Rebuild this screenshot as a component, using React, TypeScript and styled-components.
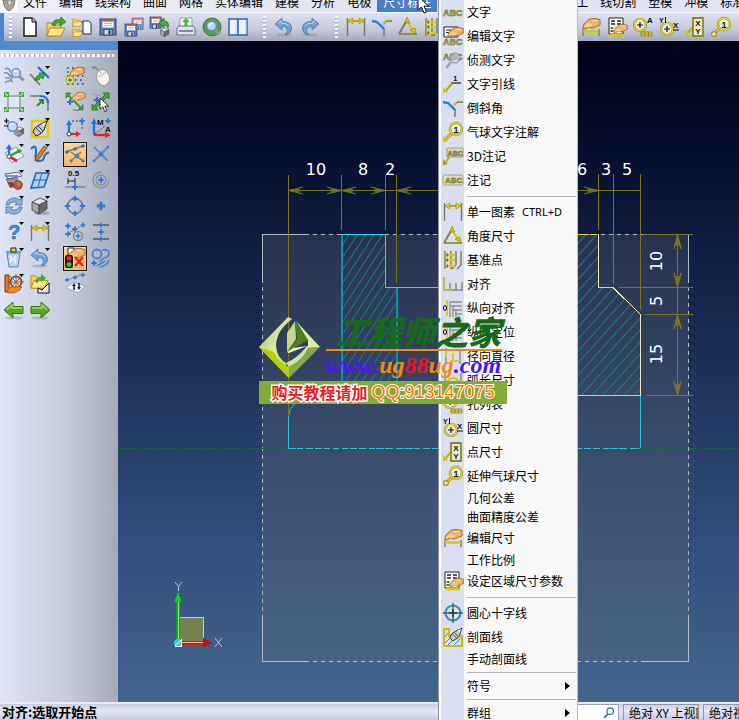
import React from 'react';
import styled, { createGlobalStyle, css } from 'styled-components';

const Global = createGlobalStyle`
  * { box-sizing: border-box; }
  html, body { margin: 0; padding: 0; }
  body, button, input {
    font-family: "Noto Sans CJK SC", "Liberation Sans", sans-serif;
    font-size: 12px;
    color: #000;
  }
  button { border: 0; padding: 0; background: none; }
`;

/* ---------- shared drawing parts ---------- */

type P = { x?: number; y?: number; s?: number };
const at = (x = 0, y = 0, s = 1) => `translate(${x} ${y}) scale(${s})`;

const Hand = ({ x, y, s }: P) => (
  <g transform={at(x, y, s)}>
    <path d="M1 9 L2 6 L7 1.5 Q9 0 13 .5 L18 1.5 V7 L14 8.5 Q12 10 9 10 L7 9 L3 11 Q0 11 1 9Z" fill="#f0b469" stroke="#9a6428" strokeWidth=".9" />
    <path d="M3 8.5 L7.5 5.5 M6 9 L10 6.5 M10 3 L15 2.5" stroke="#fbe0ae" strokeWidth="1.2" fill="none" />
  </g>
);
const Plus = ({ x, y, s }: P) => (
  <path transform={at(x, y, s)} d="M-3 0H3M0 -3V3" stroke="#2f78d8" strokeWidth="2" />
);
const Floppy = ({ x, y, s }: P) => (
  <g transform={at(x, y, s)}>
    <rect x="0" y="0" width="16" height="16" fill="#5e7fb8" stroke="#2d4676" />
    <rect x="2.5" y="1" width="11" height="7.5" fill="#fff" />
    <rect x="2.5" y="0" width="11" height="2.6" fill="#e0442c" />
    <path d="M4 4.6H12M4 6.6H12" stroke="#9aa" strokeWidth=".8" />
    <rect x="4" y="10.5" width="8" height="5.5" fill="#cfd6e4" stroke="#1d2c4c" strokeWidth=".7" />
    <rect x="8.4" y="11.5" width="2" height="4" fill="#1b2f5c" />
  </g>
);
const Lens = ({ x, y, s }: P) => (
  <g transform={at(x, y, s)}>
    <path d="M8 8 L12.5 12.5" stroke="#8a93a3" strokeWidth="3" />
    <circle cx="5" cy="5" r="4.4" fill="#bcdcfb" stroke="#6d8cb8" strokeWidth="1.4" />
    <path d="M2.8 4.4Q3.6 2.4 6 2.8" stroke="#fff" fill="none" />
  </g>
);
const Cube = ({ x, y, s }: P) => (
  <g transform={at(x, y, s)} stroke="#3a3a3a" strokeWidth=".8" strokeLinejoin="round">
    <path d="M1 4 L9 0 L16 3 L8 7Z" fill="#e6e6e6" />
    <path d="M1 4 L8 7 V16 L1 12Z" fill="#a9a9a9" />
    <path d="M8 7 L16 3 V11 L8 16Z" fill="#6c6c6c" />
  </g>
);
const Cone = ({ x, y, s }: P) => (
  <g transform={at(x, y, s)}>
    <path d="M0 10 Q1 5 6 3 L14 -1 L11 8 Q9 12 3 14Z" fill="#c9c9c9" stroke="#222" />
    <path d="M3 6 L8 11 M5 4 L10 9" stroke="#444" />
    <path d="M9 2 L13 0 L11 4Z" fill="#fff" />
  </g>
);
const Caret = () => <path d="M15 0H20L17.5 3Z" fill="#000" />;
const DimBar = ({ y = 4 }: { y?: number }) => (
  <g>
    <path d={`M1.5 ${y - 3}V19M18.5 ${y - 3}V19`} stroke="#77776c" strokeWidth="1.4" />
    <path d={`M2 ${y}H18`} stroke="#c9a800" strokeWidth="2" />
    <path d={`M2 ${y}L7 ${y - 3}V${y + 3}ZM18 ${y}L13 ${y - 3}V${y + 3}Z`} fill="#e2ce00" stroke="#8d7b00" strokeWidth=".5" />
  </g>
);
const Letters = ({ y = 14, x = 0, size = 9 }: { y?: number; x?: number; size?: number }) => (
  <text x={x} y={y} fontSize={size} fontWeight="700" fontFamily="Liberation Sans" fill="#cfc000" stroke="#66664a" strokeWidth=".5">ABC</text>
);
const Paper = () => (
  <g>
    <path d="M2 1H16V17H2Z" fill="#fff" stroke="#222" />
    <path d="M4 4H8M10 4H14M4 7H8M10 7H14" stroke="#222" strokeWidth="1.4" />
    <path d="M3.5 10H6.5V12H3.5Z" fill="#27a227" />
    <path d="M3.5 13H6.5V15H3.5Z" fill="#cc2a2a" />
  </g>
);
const Knee = () => <path d="M1 19L7 10" stroke="#c8b000" strokeWidth="2" />;
const Folder = ({ x, y, s }: P) => (
  <g transform={at(x, y, s)} stroke="#b98a1c">
    <path d="M1 4H6L8 6H15V17H1Z" fill="#f5d060" />
    <path d="M1 17L4 9H19L15 17Z" fill="#fde588" />
  </g>
);
const UndoShape = () => (
  <g>
    <ellipse cx="10" cy="18" rx="8" ry="1.6" fill="#8d94a6" opacity=".5" />
    <path d="M1 7L8 1V4.5Q18 4.5 17.5 12Q17 16.5 11 18Q14.5 14.5 13 11.5Q11.5 9.5 8 9.5V13Z" fill="#6c9fd2" stroke="#4a78ac" strokeWidth=".8" />
    <path d="M4 6.5L7 4V6Q13 6 15 9" stroke="#b7d8f5" fill="none" />
  </g>
);
const GreenArrow = () => (
  <g>
    <ellipse cx="10" cy="18" rx="9" ry="1.6" fill="#8b93a0" opacity=".5" />
    <path d="M0 10L9 2V6.5H19V13.5H9V18Z" fill="#57a81e" stroke="#33780c" />
    <path d="M3 9.5L8 5V8H18" stroke="#a9de76" fill="none" strokeWidth="1.3" />
  </g>
);
const Ring = ({ cx = 8, cy = 9, r = 6 }: { cx?: number; cy?: number; r?: number }) => (
  <g>
    <circle cx={cx} cy={cy} r={r} fill="#eeeede" stroke="#77703c" strokeWidth="2.2" />
    <circle cx={cx} cy={cy} r={r} fill="none" stroke="#ead91e" strokeWidth="1.3" />
    <path d={`M${cx - 3} ${cy}H${cx + 3}M${cx} ${cy - 3}V${cy + 3}`} stroke="#111" strokeWidth="1.2" />
  </g>
);
const Tiny = ({ x, y, t, size = 8 }: { x: number; y: number; t: string; size?: number }) => (
  <text x={x} y={y} fontSize={size} fontWeight="700" fontFamily="Liberation Sans" fill="#111">{t}</text>
);
const Cursor = ({ x, y, s }: P) => (
  <path transform={at(x, y, s)} d="M0 0V14L3.5 11L6 17L8.5 16L6 10.2H10.5Z" fill="#fff" stroke="#111" />
);
const Balloon = () => (
  <g>
    <path d="M1 19L8 12" stroke="#8b8422" strokeWidth="3" /><path d="M1 19L8 12" stroke="#ead91e" strokeWidth="1.6" />
    <path d="M0 19.5V14L5 19Z" fill="#d8c400" />
    <circle cx="13" cy="7" r="6" fill="#edf0e8" stroke="#8b8422" strokeWidth="2.4" />
    <circle cx="13" cy="7" r="6" fill="none" stroke="#ead91e" strokeWidth="1.3" />
    <Tiny x={10.6} y={10.5} t="1" size={9} />
  </g>
);

const icons: Record<string, React.ReactNode> = {
  newDoc: <><path d="M4 1H12L16 5V19H4Z" fill="#fff" stroke="#111" strokeWidth="1.4" /><path d="M12 1V5H16" fill="#ccd" stroke="#111" /></>,
  open: <><Folder x={0} y={2} /><path d="M6 8Q8 1 14 3L15 0L20 5L14 9V6Q10 5 9 9Z" fill="#3fae2a" stroke="#1d7412" strokeWidth=".7" /></>,
  merge: <><Folder x={0} y={0} s={0.55} /><Folder x={0} y={10} s={0.55} /><path d="M9 5H13V14H9" stroke="#667" fill="none" /><path d="M11 4H17L19 6V17H11Z" fill="#f4f8ff" stroke="#234" /></>,
  save: <Floppy x={2} y={2} />,
  saveAs: <><g opacity=".7"><Floppy x={8} y={1} s={0.7} /></g><Floppy x={1} y={7} s={0.75} /></>,
  saveObj: <><Floppy x={0} y={0} s={0.7} /><path d="M9 6L14 1V4Q20 4 18 11Q17 8 14 8V11Z" fill="#42b52b" stroke="#1d7412" strokeWidth=".7" /><Cube x={10} y={11} s={0.55} /></>,
  print: <><path d="M4 1H16V11H4Z" fill="#f7f8fa" stroke="#99a" /><path d="M10 1L14 5H11.5V9H8.5V5H6Z" fill="#3bc22b" /><path d="M1 11L3 9H17L19 11V18H1Z" fill="#dfe2e8" stroke="#697080" /><path d="M3 14H17" stroke="#697080" strokeWidth="1.6" /></>,
  preview: <><circle cx="10" cy="10" r="9" fill="#5d9b4c" stroke="#3f7a35" /><Lens x={4} y={3.5} s={1.1} /></>,
  layout: <><path d="M1 2H19V18H1Z" fill="#edf4ff" stroke="#2f62b8" strokeWidth="1.5" /><path d="M10 2V18" stroke="#2f62b8" strokeWidth="1.6" /><path d="M8 3V17M18 3V17" stroke="#b9cdee" /></>,
  undo: <UndoShape />,
  redo: <g transform="translate(20 0) scale(-1 1)"><UndoShape /></g>,
  dim: <DimBar />,
  chamfer: <><path d="M9 8L12 12V19" stroke="#8c917e" strokeWidth="2" fill="none" /><path d="M11 7L14 4H20" stroke="#85885e" strokeWidth="2" fill="none" /><path d="M11 7L14 3H19" stroke="#e3d42a" strokeWidth="1.2" fill="none" /><path d="M0 4L5 5L12 12" stroke="#2c7ae0" strokeWidth="2.4" fill="none" /></>,
  angle: <><path d="M1 17L9 3" stroke="#7c7c66" strokeWidth="2" /><path d="M1 17H19" stroke="#8b8422" strokeWidth="1.6" /><path d="M9 4L16 15" stroke="#d9c800" strokeWidth="2" fill="none" /><path d="M18 17L12 13L17 11ZM7 6L9 0L12 6Z" fill="#d9c800" stroke="#7b6f00" strokeWidth=".5" /></>,
  datum: <><path d="M2 1V19M8 1V19M13 1V15L9 19M18 1V15L14 19" stroke="#77776c" strokeWidth="1.4" fill="none" /><path d="M2 5H12M2 10H12M2 16H12" stroke="#e0cc00" strokeWidth="2.4" /><path d="M2 5L5 3V7ZM2 10L5 8V12ZM2 16L5 14V18Z" fill="#8d7b00" /></>,
  editDim: <><path d="M2 12V19M18 12V19" stroke="#777" strokeWidth="1.4" /><path d="M2 14.5H18" stroke="#d9c800" strokeWidth="2.4" /><Hand x={1} y={1} s={1} /></>,
  setDim: <><Paper /><path d="M3 18H17" stroke="#d9c800" strokeWidth="2.6" /><Hand x={6} y={7} s={0.8} /></>,
  holes: <><Ring cx={7} cy={8} /><Tiny x={14} y={6} t="A" /><path d="M8 15H19V19H8ZM8 17H19M12 15V19M15.5 15V19" fill="#efe254" stroke="#8b7c00" strokeWidth=".8" /></>,
  circleDim: <><Ring cx={8} cy={12} /><Tiny x={0} y={6} t="Y" size={7} /><path d="M6.5 0V6M14 13H20" stroke="#111" /><Tiny x={14} y={11} t="X" size={8} /></>,
  pointDim: <><path d="M1 18L8 10" stroke="#c8b000" strokeWidth="2" /><path d="M0 19V13L5 18Z" fill="#d8c400" /><path d="M8 1H18V19H8Z" fill="#ecebd0" stroke="#908724" strokeWidth="1.8" /><Tiny x={10.2} y={9} t="X" /><Tiny x={10.2} y={17} t="Y" /></>,
  balloon: <Balloon />,
  extBalloon: <><Balloon /><circle cx="3" cy="17" r="2.4" fill="#e6e6c0" stroke="#a89b10" strokeWidth="1.4" /></>,
  abc: <Letters />,
  editAbc: <><path d="M1 1H15V11H1Z" fill="#fff" stroke="#222" /><path d="M3 4H9M3 6.5H7" stroke="#222" /><Hand x={4} y={1} s={0.9} /><Letters y={19} /></>,
  probeAbc: <><Letters y={10} /><circle cx="12" cy="8" r="5" fill="#c6d2ea" fillOpacity=".5" stroke="#8089a0" /><path d="M8 12L3 18" stroke="#9aa3b5" strokeWidth="2.4" /></>,
  leader: <><path d="M2 17L9 9H18" stroke="#77703c" strokeWidth="2.2" fill="none" /><path d="M2 16L8 9" stroke="#ead91e" strokeWidth="1.8" /><path d="M0 19V13L5 18Z" fill="#d8c400" /><Tiny x={10} y={7} t="1" /></>,
  note3d: <><Knee /><path d="M0 19V13L5 18Z" fill="#a89b10" /><path d="M4 2H20V11H4Z" fill="#d8d6bd" stroke="#aaa67c" /><Letters x={4.6} y={9.5} size={7} /></>,
  note: <><rect x="0" y="5" width="20" height="10" rx="2" fill="#dddbc4" stroke="#aaa67c" /><Letters x={2} y={13} size={8} /></>,
  align: <><path d="M1 3V16H19V8M7 9V16M13 9V16" stroke="#88887c" strokeWidth="1.5" fill="none" /><path d="M1 3V16H9" stroke="#dccb24" strokeWidth="1.2" fill="none" /></>,
  valign: <><path d="M7 4H19M7 8H19M9 12H19M12 16H19M7 4V19M10 8V19M13 12V19" stroke="#8e9286" strokeWidth="1.3" /><path d="M4 2V18" stroke="#d9c800" strokeWidth="1.6" /><ellipse cx="2" cy="10" rx="1.6" ry="2.4" fill="none" stroke="#111" /></>,
  radial: <><path d="M3 2V18M3 4H17V18" stroke="#888" fill="none" strokeWidth="1.4" /><path d="M3 3V12M7 15H17M10 15V7" stroke="#dccb24" strokeWidth="2" /></>,
  arcLen: <><path d="M2 3V17M18 3V17" stroke="#888" strokeWidth="1.4" /><path d="M2 14Q10 2 18 14" stroke="#d9c800" fill="none" strokeWidth="2.2" /></>,
  center: <><circle cx="10" cy="10" r="7.5" fill="#d7e6f5" stroke="#4a86c6" strokeWidth="2.2" /><path d="M0 10H20M10 0V20" stroke="#1f7a3a" strokeWidth="1.4" /><path d="M6 10H14M10 6V14" stroke="#124" strokeWidth="1" /></>,
  hatch: <><path d="M1 2H6V9H19V19H1Z" fill="#cfe1f5" stroke="#d3bf00" strokeWidth="2" /><path d="M2 10L5 6M2 16L9 9M5 18L13 10M11 18L18 11" stroke="#4a86c6" /><Cone x={7} y={2} s={0.85} /></>,
  find: <><path d="M8 12L2 18" stroke="#336fb0" strokeWidth="3" /><circle cx="12" cy="7" r="5.4" fill="#eef6ff" stroke="#336fb0" strokeWidth="2" /></>,

  zoomDyn: <><path d="M1 3Q5 1 6 5L9 8M0 7Q4 6 5 9L9 12M1 12Q5 11 8 14M1 17Q5 13 9 16" stroke="#8492a8" strokeWidth="1.6" fill="none" /><Lens x={7} y={2} s={1} /></>,
  fit: <><path d="M4 4H16V16H4Z" fill="#dbe7fa" stroke="#777" /><path d="M0 0H5V5H0ZM15 0H20V5H15ZM0 15H5V20H0ZM15 15H20V20H15Z" fill="#3fae2a" /><path d="M1 1L4 4M19 1L16 4M1 19L4 16M19 19L16 16" stroke="#bff0b0" strokeWidth="1.2" /></>,
  zoomPm: <><Cube x={10} y={9} s={0.6} /><Lens x={3} y={3} s={1.1} /><path d="M0 3H5M2.5 .5V5.500M0 8H4" stroke="#111" strokeWidth="1.2" /><Caret /></>,
  axes: <><path d="M1 9L12 3L20 12L8 19Z" fill="#eef3fb" stroke="#8c97aa" /><path d="M5 12V3" stroke="#1e74e0" strokeWidth="2.4" /><path d="M2 5L5 0L8 5Z" fill="#1e74e0" /><path d="M6 12L15 7" stroke="#2f9e29" strokeWidth="2.2" /><path d="M13 5L18 6L15 10Z" fill="#2f9e29" /><path d="M6 13L13 17" stroke="#e02525" strokeWidth="2.6" /><circle cx="5" cy="12.500" r="2" fill="#fff" stroke="#556" /><Caret /></>,
  paint: <><path d="M1 4L15 2L18 6L4 9ZM2 9L14 8L11 12H4Z" fill="#e9edf3" stroke="#667" /><path d="M1 6H14M3 10H13" stroke="#5878b8" strokeWidth="1.4" /><path d="M3 12H9L11 17L6 18Z" fill="#8a4a1c" /><circle cx="14" cy="15" r="4.5" fill="#d8483a" stroke="#722" strokeWidth=".6" /><circle cx="15" cy="14" r="2" fill="#56b04a" /><Caret /></>,
  refresh: <><path d="M2 9Q3 2 10 2Q14 2 16 4L18 2V9H11L13 7Q8 4 5 9ZM18 11Q17 18 10 18Q6 18 4 16L2 18V11H9L7 13Q12 16 15 11Z" fill="#86b2de" stroke="#5580ae" strokeWidth=".9" /><Caret /></>,
  help: <><text x="4" y="17" fontSize="20" fontWeight="700" fontFamily="Liberation Sans" fill="#4f8fd6" stroke="#2a5f9e" strokeWidth=".6">?</text><Caret /></>,
  trash: <><path d="M3 5H16L14 19H5Z" fill="#b7d6ee" stroke="#5c83a5" /><path d="M2 4H17" stroke="#7fa3c2" strokeWidth="2.4" /><path d="M6 8L8 11L6 14M12 8L10 11L12 15" stroke="#f4faff" strokeWidth="1.6" fill="none" /><path d="M7 0H12V4H7Z" fill="#e7cf33" stroke="#222" /><Caret /></>,
  wheel: <><circle cx="12" cy="8" r="5.500" fill="none" stroke="#7a5038" strokeWidth="1.8" /><path d="M4 8H20M12 0V16M6 2L18 14M18 2L6 14" stroke="#8a6048" /><path d="M1 1H5V18H1Z" fill="#e07a1c" stroke="#6e3b0c" /><path d="M4 15Q8 11 12 13L17 12L16 16L10 19H4Z" fill="#f28a1e" stroke="#a3520a" strokeWidth=".7" /><Caret /></>,
  left: <GreenArrow />,
  right: <g transform="translate(20 0) scale(-1 1)"><GreenArrow /></g>,
  trim: <><path d="M0 8L10 19" stroke="#777" strokeWidth="1.8" /><path d="M8 1L19 12" stroke="#2472d8" strokeWidth="2.2" /><path d="M4 14L7 10L10 9L9 7L15 7L13 13L11 11L9 14Z" fill="#3fae2a" stroke="#1d7412" strokeWidth=".7" /><Caret /></>,
  fillet: <><path d="M0 4H10M18 10V19" stroke="#777" strokeWidth="1.6" /><path d="M10 4Q18 4 18 11" stroke="#2472d8" strokeWidth="2.2" fill="none" /><path d="M7 14L13 8M9 8H13V12" stroke="#2a8f1f" strokeWidth="2" fill="none" /><Caret /></>,
  analyze: <><path d="M2 3H18V19H2Z" fill="#d8dce6" stroke="#e4cc00" strokeWidth="2.4" /><Cone x={3} y={4} s={1} /><Caret /></>,
  sketch: <><path d="M1 5Q6 -1 6 8Q4 18 9 17Q14 17 14 13Q14 11 19 8" stroke="#2c6fc4" strokeWidth="2.2" fill="none" /><path d="M6 13L14 2L17 4L9 15L5 17Z" fill="#d9822d" stroke="#6b3a0b" strokeWidth=".8" /><Caret /></>,
  surface: <><path d="M6 3H19L14 17L1 18Z" fill="#a8d0f5" stroke="#2a64ac" strokeWidth="1.6" /><path d="M12 3L8 17M4 10H17" stroke="#2a64ac" /><Caret /></>,
  cube: <><ellipse cx="12" cy="17" rx="8" ry="2" fill="#8b90a0" opacity=".6" /><Cube x={1} y={2} /><Caret /></>,
  dimMenu: <><DimBar y={6} /><Caret /></>,
  undoMenu: <><UndoShape /><Caret /></>,
  folderDoc: <><Folder x={0} y={-2} s={0.95} /><path d="M5 8Q6 3 11 3V0L16 4L11 8V6Q8 6 8 9Z" fill="#3fae2a" /><path d="M8 19V14L12 16L19 9V19Z" fill="#fff" stroke="#111" /></>,
  pickGrid: <><path d="M2 2H19M2 10H19M2 18H19" stroke="#246" strokeWidth="1.5" strokeDasharray="1.5 3.5" /><path d="M2 6H6M10 14H19" stroke="#246" strokeWidth="1.5" strokeDasharray="1.5 3.5" /><Hand x={4} y={1} s={0.85} /><circle cx="5" cy="14" r="4" fill="#f5e94a" stroke="#b8a800" /><Plus x={5} y={14} s={0.7} /></>,
  pickArrow: <><path d="M1 1H6L4 3L16 15L18 13V18H13L15 16L3 4L1 6Z" fill="#3fae2a" stroke="#1d7412" strokeWidth=".6" /><Hand x={6} y={0} s={0.8} /><Plus x={5} y={10} /><path d="M8 18Q17 20 18 12" stroke="#667" fill="none" /></>,
  frame: <><path d="M4 16V6" stroke="#1e74e0" strokeWidth="2.2" /><path d="M1 7L4 2L7 7Z" fill="#1e74e0" /><path d="M4 16H12" stroke="#e02525" strokeWidth="2.2" /><path d="M11 13L16 16L11 19Z" fill="#e02525" /><path d="M7 3H17V12" stroke="#333" strokeDasharray="2 2" fill="none" /><Plus x={17} y={3} s={0.9} /><circle cx="4" cy="16" r="2" fill="#fff" stroke="#333" /></>,
  points: <><path d="M1 8L18 2M6 8L18 17M6 17L16 8" stroke="#7d7866" strokeWidth="1.4" /><Plus x={2} y={8} s={0.7} /><Plus x={10} y={5} s={0.7} /><Plus x={18} y={2} s={0.7} /><Plus x={12} y={12} s={0.8} /><Plus x={6} y={17} s={0.6} /><Plus x={18} y={17} s={0.6} /></>,
  half: <><Tiny x={3} y={6} t="0.5" size={8} /><path d="M3 8V14M10 8V14M3 11H10" stroke="#222" /><path d="M0 17H20" stroke="#667" /><Plus x={10} y={17} /></>,
  circlePts: <><circle cx="10" cy="10" r="7.5" fill="none" stroke="#777" strokeWidth="1.4" /><Plus x={10} y={2.5} s={0.9} /><Plus x={10} y={17.5} s={0.9} /><Plus x={2.5} y={10} s={0.9} /><Plus x={17.5} y={10} s={0.9} /></>,
  cluster: <><path d="M2 12L18 3" stroke="#888" /><circle cx="13" cy="14" r="4.5" fill="none" stroke="#888" strokeWidth="1.4" /><Plus x={3} y={4} s={0.9} /><Plus x={10} y={7} s={0.9} /><Plus x={18} y={3} s={0.8} /><Plus x={3} y={12} s={0.9} /><Plus x={13} y={14} s={0.8} /></>,
  stopPick: <><path d="M3 0H9V8H3Z" fill="#fff" stroke="#222" /><Hand x={2} y={0} s={1} /><rect x="0" y="7" width="8" height="13" rx="2" fill="#181818" /><circle cx="4" cy="10.5" r="2.4" fill="#f02525" /><circle cx="4" cy="16.5" r="2.4" fill="#27d13c" /><path d="M10 9L18 18M18 9L10 18" stroke="#e82418" strokeWidth="2.6" /></>,
  planePts: <><path d="M2 6L18 0" stroke="#888" /><Plus x={2} y={6} s={0.7} /><Plus x={10} y={3.5} s={0.7} /><Plus x={18} y={1} s={0.7} /><path d="M1 14L8 8L20 12L13 19Z" fill="#e8f2fd" stroke="#9ab" /><path d="M9 16V11M14 9V14" stroke="#223" strokeWidth="1.6" /><path d="M12 13H16L14 16ZM7 12H11L9 9Z" fill="#223" /></>,
  mouse: <><path d="M3 3Q0 0 4 1L8 5" stroke="#888" fill="none" strokeWidth="1.6" /><ellipse cx="12" cy="11.5" rx="6.5" ry="8" fill="#f5f3ee" stroke="#9a9a9a" transform="rotate(-18 12 11.5)" /><path d="M9 4L10 8M5 11Q11 11 15 6" stroke="#bbb" fill="none" /></>,
  vecPick: <><path d="M2 2Q18 4 18 19" stroke="#999" /><path d="M12 1H18V7L16 5L5 16L7 18H1V12L3 14L14 3Z" fill="#3fae2a" stroke="#1d7412" strokeWidth=".8" /><Plus x={6} y={8} s={1.1} /><Cursor x={9} y={6} s={0.8} /></>,
  axisMA: <><path d="M3 17V4" stroke="#1e74e0" strokeWidth="2.4" /><path d="M0 6L3 0L6 6Z" fill="#1e74e0" /><path d="M3 17H16" stroke="#e02525" strokeWidth="2.4" /><path d="M14 14L20 17L14 20Z" fill="#e02525" /><path d="M4 16L14 8" stroke="#445" strokeDasharray="2 1.5" /><Tiny x={6} y={7} t="M" /><Tiny x={14} y={14} t="A" /><Plus x={17} y={3} s={0.9} /></>,
  cross: <><path d="M3 3L17 17M17 3L3 17" stroke="#777" strokeWidth="1.5" /><path d="M6 6L14 14M14 6L6 14" stroke="#4f8be0" strokeWidth="1.4" /><Plus x={10} y={10} s={0.8} /><Plus x={3} y={17} s={0.5} /><Plus x={17} y={3} s={0.5} /></>,
  rings: <><circle cx="10" cy="10" r="8" fill="none" stroke="#8a8f9c" strokeWidth="1.3" strokeDasharray="38 12" /><circle cx="10" cy="10" r="5" fill="none" stroke="#8a8f9c" strokeWidth="1.3" /><Plus x={10} y={10} s={0.9} /></>,
  plus: <Plus x={10} y={10} s={1.4} />,
  between: <><path d="M2 3H18M2 17H18" stroke="#556" strokeWidth="1.4" /><Plus x={10} y={3} s={0.8} /><Plus x={10} y={10} s={0.9} /><Plus x={10} y={17} s={0.8} /></>,
  curves: <><circle cx="6" cy="6" r="4.5" fill="none" stroke="#4680c8" strokeWidth="1.8" /><path d="M11 2Q18 1 18 5Q18 9 13 10L8 14M18 12Q16 18 9 19M6 18L14 13" stroke="#4680c8" strokeWidth="1.6" fill="none" /><Plus x={3} y={15} s={0.9} /></>,
};

const Svg = styled.svg`
  display: block;
  flex: none;
  overflow: visible;
`;
const Icon = ({ name, size = 20 }: { name: string; size?: number }) => (
  <Svg width={size} height={size} viewBox="0 0 20 20" fill="none" aria-hidden="true">{icons[name]}</Svg>
);

/* ---------- layout ---------- */

const Shell = styled.div`
  position: relative;
  height: 100vh;
  overflow: hidden;
  display: grid;
  grid-template-rows: 13px 28px minmax(0, 1fr) 18px;
`;
const MenuBar = styled.nav`
  display: flex;
  align-items: flex-end;
  height: 13px;
  overflow: hidden;
  background: linear-gradient(90deg, #eff0f6, #dfe2f0 60%, #dfe5f6);
  border-bottom: 1px solid #f4f6fb;
`;
const AppGlyph = styled.span`
  flex: none;
  width: 17px;
  height: 12px;
  overflow: hidden;
  background: #fff;
`;
const MenuButton = styled.button<{ $open?: boolean; $skip?: boolean }>`
  flex: none;
  height: 20px;
  padding: 0 6px;
  line-height: 18px;
  white-space: nowrap;
  ${p => p.$skip && css`margin-left: 121px;`}
  ${p => p.$open && css`background: #4a7ec6; color: #fff;`}
`;
const ToolBar = styled.div`
  display: flex;
  align-items: center;
  overflow: hidden;
  border-left: 4px solid #4b86cc;
  background: linear-gradient(180deg, #dee2f1, #c4c8da 60%, #a3a8ba);
`;
const VGrip = styled.span`
  flex: none;
  width: 3px;
  height: 22px;
  margin: 0 5px;
  background: repeating-linear-gradient(180deg, #f8f8fa 0 2px, #a9adb8 2px 3px, transparent 3px 4px);
`;
const ToolGroup = styled.div<{ $gap: number }>`
  display: flex;
  flex: none;
  margin-left: ${p => p.$gap}px;
`;
const ToolButton = styled.button`
  display: grid;
  place-items: center;
  width: 26px;
  height: 26px;
`;
const Work = styled.div`
  display: grid;
  grid-template-columns: 118px minmax(0, 1fr);
  min-height: 0;
`;
const Side = styled.aside`
  display: grid;
  grid-template-columns: 53px 54px;
  column-gap: 8px;
  align-content: start;
  border-top: 9px solid #4d8bd2;
  background: linear-gradient(90deg, #dfe5f6, #c3c9d8 60%, #a4aaba);
`;
const Strip = styled.div`
  display: grid;
  grid-template-columns: 26px 26px;
  grid-template-rows: 13px;
  grid-auto-rows: 26px;
  padding-left: 1px;
  justify-items: center;
  align-items: center;
`;
const StripHead = styled.div`
  grid-column: 1 / -1;
  justify-self: stretch;
  height: 13px;
  padding-top: 4px;
`;
const HGrip = styled.div`
  height: 3px;
  background: repeating-linear-gradient(90deg, #fafafa 0 3px, #a4a8b2 3px 4px, transparent 4px 5px);
`;
const SideButton = styled.button<{ $on?: boolean }>`
  display: grid;
  place-items: center;
  width: 24px;
  height: 25px;
  ${p => p.$on && css`
    border: 1px solid #1c1c1c;
    background: linear-gradient(180deg, #fdd79a, #f9b765);
  `}
`;
const Canvas = styled.main`
  min-width: 0;
  overflow: hidden;
  background: linear-gradient(180deg, #000016 0%, #071030 18%, #1b2d55 46%, #324f7d 76%, #43668f 100%);
`;
const Drawing = styled.svg`
  display: block;
  width: 100%;
  height: 100%;
`;
const Status = styled.footer`
  display: flex;
  gap: 4px;
  overflow: hidden;
  border-top: 2px solid #e8ebf4;
  background: linear-gradient(180deg, #c9cddd, #e4e7f4 40%, #c8ccde);
`;
const Prompt = styled.span`
  flex: 1;
  padding-left: 2px;
  font-size: 13px;
  font-weight: 700;
  line-height: 16px;
  white-space: nowrap;
`;
const Search = styled.label`
  display: flex;
  align-items: center;
  width: 140px;
  padding-right: 3px;
  border: 1px solid #9a9fb0;
  border-bottom: 0;
  background: #fff;
`;
const SearchInput = styled.input`
  flex: 1;
  min-width: 0;
  height: 12px;
  padding: 0;
  border: 0;
  outline: 0;
`;
const Field = styled.button<{ $w: number; $last?: boolean }>`
  width: ${p => p.$w}px;
  padding-left: 5px;
  overflow: hidden;
  border: 1px solid #8f95a8;
  border-bottom: 0;
  ${p => p.$last && css`border-right: 0;`}
  line-height: 16px;
  text-align: left;
  white-space: nowrap;
`;

/* ---------- overlays ---------- */

const Menu = styled.div`
  position: absolute;
  top: 0;
  left: 438px;
  width: 140px;
  height: 100%;
  overflow: hidden;
  border-left: 1px solid #8f95a4;
  border-right: 1px solid #b4bdc9;
  background: linear-gradient(90deg, #fbfbfd 0 2px, #d9def0 2px 25px, #f8f8f8 25px);
`;
const MenuRow = styled.button<{ $icon?: boolean }>`
  display: grid;
  grid-template-columns: 20px auto 1fr;
  column-gap: 4px;
  align-items: center;
  width: 100%;
  height: ${p => (p.$icon ? 24 : 19)}px;
  padding: 0 7px 0 4px;
  line-height: 18px;
  text-align: left;
  white-space: nowrap;
`;
const Shortcut = styled.kbd`
  padding-left: 3px;
  font: 11px/18px "Noto Sans", sans-serif;
`;
const Sub = styled.svg`
  justify-self: end;
`;
const Rule = styled.hr`
  height: 1px;
  margin: 4px 1px 3px 28px;
  border: 0;
  background: #b3b7c2;
`;
const Pointer = styled.svg`
  position: absolute;
  top: -5px;
  left: 417px;
  width: 14px;
  height: 20px;
`;
const Watermark = styled.div`
  position: absolute;
  top: 315px;
  left: 259px;
  width: 248px;
  pointer-events: none;
`;
const Brand = styled.div`
  display: grid;
  grid-template-columns: 61px 1fr;
  column-gap: 6px;
  height: 66px;
`;
const BrandText = styled.div`
  display: grid;
  grid-template-rows: 34px 2px 28px;
  width: 176px;
`;
const BrandName = styled.strong`
  padding-left: 10px;
  color: #176a1b;
  font-size: 33px;
  font-style: italic;
  font-weight: 900;
  line-height: 32px;
  white-space: nowrap;
`;
const BrandRule = styled.span`
  background: #f58a12;
`;
const BrandUrl = styled.a`
  color: #4a14f4;
  font: italic 700 24px/28px "Liberation Serif", serif;
  text-decoration: none;
  white-space: nowrap;
`;
const Tint = styled.span<{ $c: string }>`
  color: ${p => p.$c};
`;
const Banner = styled.p`
  display: flex;
  justify-content: center;
  gap: 4px;
  height: 23px;
  margin: 0;
  background: #84ab36;
  color: #f08a14;
  font: 700 16px/23px "Noto Sans CJK SC", sans-serif;
  white-space: nowrap;
  -webkit-text-stroke: 3px #fff;
  paint-order: stroke fill;
`;
const QQ = styled.span`
  color: #f07800;
  font: 18px/23px "Liberation Sans", sans-serif;
  -webkit-text-stroke: 2px #fff;
`;

/* ---------- data ---------- */

const menus = ['文件', '编辑', '线架构', '曲面', '网格', '实体编辑', '建模', '分析', '电极', '尺寸标注'];
const menusRight = ['加工', '线切割', '塑模', '冲模', '标准件'];
const toolFile: [string, string][] = [['newDoc', '新建'], ['open', '打开'], ['merge', '合并'], ['save', '保存'], ['saveAs', '另存'], ['saveObj', '保存对象'], ['print', '打印'], ['preview', '预览'], ['layout', '视窗']];
const toolEdit: [string, string][] = [['undo', '撤销'], ['redo', '重做']];
const toolDim: [string, string][] = [['dim', '单一图素'], ['chamfer', '倒斜角'], ['angle', '角度尺寸'], ['datum', '基准点']];
const toolRight: [string, string][] = [['editDim', '编辑尺寸'], ['setDim', '设定参数'], ['holes', '孔列表'], ['circleDim', '圆尺寸'], ['pointDim', '点尺寸'], ['extBalloon', '气球']];
const stripA = ['zoomDyn', 'trim', 'fit', 'fillet', 'zoomPm', 'analyze', 'axes', 'sketch', 'paint', 'surface', 'refresh', 'cube', 'help', 'dimMenu', 'trash', 'undoMenu', 'wheel', 'folderDoc', 'left', 'right'];
const stripB = ['pickGrid', 'mouse', 'pickArrow', 'vecPick', 'frame', 'axisMA', 'points', 'cross', 'half', 'rings', 'circlePts', 'plus', 'cluster', 'between', 'stopPick', 'curves', 'planePts'];

type Entry = { t: string; i?: string; k?: string; sub?: boolean } | null;
const entries: Entry[] = [
  { t: '文字', i: 'abc' }, { t: '编辑文字', i: 'editAbc' }, { t: '侦测文字', i: 'probeAbc' }, { t: '文字引线', i: 'leader' },
  { t: '倒斜角', i: 'chamfer' }, { t: '气球文字注解', i: 'balloon' }, { t: '3D注记', i: 'note3d' }, { t: '注记', i: 'note' },
  null,
  { t: '单一图素', i: 'dim', k: 'CTRL+D' }, { t: '角度尺寸', i: 'angle' }, { t: '基准点', i: 'datum' }, { t: '对齐', i: 'align' },
  { t: '纵向对齐', i: 'valign' }, { t: '纵向定位', i: 'valign' }, { t: '径向直径', i: 'radial' }, { t: '弧长尺寸', i: 'arcLen' },
  { t: '孔列表', i: 'holes' }, { t: '圆尺寸', i: 'circleDim' }, { t: '点尺寸', i: 'pointDim' }, { t: '延伸气球尺寸', i: 'extBalloon' },
  { t: '几何公差' }, { t: '曲面精度公差' }, { t: '编辑尺寸', i: 'editDim' }, { t: '工作比例' }, { t: '设定区域尺寸参数', i: 'setDim' },
  null,
  { t: '圆心十字线', i: 'center' }, { t: '剖面线', i: 'hatch' }, { t: '手动剖面线' },
  null,
  { t: '符号', sub: true },
  null,
  { t: '群组', sub: true },
];

/* ---------- drawing ---------- */

const olive = '#7d7420';
const HArrow = ({ x, d }: { x: number; d: 1 | -1 }) => (
  <path d={`M${x + 14 * d} 187L${x} 190.500L${x + 14 * d} 194M${x + 11 * d} 189L${x} 190.500L${x + 11 * d} 192`} stroke={olive} fill="none" />
);
const VArrow = ({ y, d }: { y: number; d: 1 | -1 }) => (
  <path d={`M674 ${y + 14 * d}L677.500 ${y}L681 ${y + 14 * d}M676 ${y + 11 * d}L677.500 ${y}L679 ${y + 11 * d}`} stroke={olive} strokeWidth="1.4" fill="none" />
);
const Scene = () => (
  <Drawing role="img" aria-label="零件图">
    <defs>
      <pattern id="hatchL" width="7" height="7" patternUnits="userSpaceOnUse" patternTransform="rotate(33)">
        <path d="M.5 0V7" stroke="#197a8c" />
      </pattern>
      <pattern id="hatchR" width="8" height="8" patternUnits="userSpaceOnUse" patternTransform="rotate(42)">
        <path d="M.5 0V8" stroke="#197a8c" />
      </pattern>
      <linearGradient id="stock" x1="0" y1="0" x2="0" y2="1">
        <stop offset="0" stopColor="#8a8a8a" stopOpacity=".2" />
        <stop offset="1" stopColor="#6a6a6a" stopOpacity=".26" />
      </linearGradient>
    </defs>
    <g transform="translate(-118 -41)" fill="none" shapeRendering="crispEdges">
      <rect x="262" y="234" width="427" height="427" fill="url(#stock)" />
      <path d="M305 234.5H643M262.5 279V617M688.5 279V617M305 661.5H643" stroke="#b4bac6" strokeDasharray="4 4" />
      <path d="M305 234.5H262.5V279M643 234.5H688.5V279M262.5 617V661.5H305M643 661.5H688.5V617" stroke="#b4bac6" />
      <g shapeRendering="auto">
        <path d="M341 234H386V287H397V395H341Z" fill="url(#hatchL)" />
        <path d="M500 234H598V287H613L640 314V395H500Z" fill="url(#hatchR)" />
      </g>
      <path d="M341.5 234V395M396.5 287V395" stroke="#0f8ea6" strokeWidth="2" />
      <path d="M341 234.5H385.5V287.5H470" stroke="#35d3ee" />
      <path d="M288.5 416V448.5H640.5V396" stroke="#26c3e0" />
      <path d="M118 448.500H2000" stroke="#126a2c" strokeDasharray="7 2 2 2" />
      <path d="M288 448.500H640" stroke="#26c3e0" strokeDasharray="6 3" />
      <path d="M288.5 416Q290 401 310 396" stroke="#26c3e0" shapeRendering="auto" />
      <path d="M500 395.5H640.5V314M598.5 234V287.5H613L640 314" stroke="#f2eab0" />
      <path d="M500 395.5H640M598 287.5H613" stroke="#e8dc3c" />
      <path d="M500 234.5H598" stroke="#e8dc3c" strokeDasharray="7 2" />
      <path d="M288.5 175V416M341.5 175V230M385.5 175V230M396.5 175V283M598.5 174V230M613.5 174V283M640.5 174V310M288 190.5H640" stroke={olive} />
      <path d="M643 234.5H693M619 287.5H693M645 314.5H693M646 395.5H693M677.5 234V395" stroke={olive} />
      <g shapeRendering="auto">
        <HArrow x={289} d={1} /><HArrow x={341} d={-1} /><HArrow x={342} d={1} /><HArrow x={385} d={-1} /><HArrow x={397} d={1} /><HArrow x={598} d={-1} />
        <VArrow y={235} d={1} /><VArrow y={287} d={-1} /><VArrow y={315} d={1} /><VArrow y={395} d={-1} />
      </g>
      <g fill="#fff" fontFamily="DejaVu Sans" fontSize="16" textAnchor="middle">
        <text x="316" y="175">10</text><text x="363" y="175">8</text><text x="390" y="175">2</text>
        <text x="582" y="175">6</text><text x="606" y="175">3</text><text x="627" y="175">5</text>
        <text transform="translate(662 261) rotate(-90)">10</text>
        <text transform="translate(662 301) rotate(-90)">5</text>
        <text transform="translate(662 354) rotate(-90)">15</text>
      </g>
      <rect x="179.5" y="617.5" width="24" height="25" fill="#75814f" stroke="#e4dc30" />
      <path d="M178 643V600" stroke="#0fa81a" strokeWidth="4" /><path d="M178.5 643V600" stroke="#7fe884" />
      <path d="M174 602L178 592L182 602Z" fill="#0bcf18" />
      <path d="M180 643H205" stroke="#d81a10" strokeWidth="4" /><path d="M181 642.5H204" stroke="#ffb0a0" />
      <path d="M203 638L213 643L203 647Z" fill="#c41408" />
      <circle cx="178" cy="643" r="4" fill="#28cfe6" />
      <path d="M175 646.500H181.500V639M175 646L181 640" stroke="#e8f4f4" />
      <g stroke="#b9c4d4" shapeRendering="auto"><path d="M175 582L178.500 586.500L182 582M178.500 586V591M215 638L222 647M222 638L215 647" /></g>
    </g>
  </Drawing>
);

const Logo = () => (
  <Svg width="61" height="64" viewBox="0 0 61 64" aria-hidden="true">
    <defs>
      <linearGradient id="leaf" x1="0" y1="0" x2="1" y2="1">
        <stop offset="0" stopColor="#a9bd78" /><stop offset=".5" stopColor="#dcea9c" /><stop offset="1" stopColor="#a9cc30" />
      </linearGradient>
    </defs>
    <path d="M29 2L33 4Q17 16 17 31Q18 43 27 48L30 63L0 32Z" fill="url(#leaf)" />
    <path d="M0 32L15 37Q19 47 30 52V63Z" fill="#b2d200" />
    <path d="M30 63V52Q44 45 49 33L61 32Z" fill="#8aa648" />
    <path d="M27 48L30 52Q44 45 49 33L61 32L48 31Q40 42 27 48Z" fill="#d6e596" />
    <path d="M36 6L28 18V37L37 24Z" fill="#c3d78a" />
    <path d="M36 6L38 24L28 37L49 25Z" fill="#4f7d22" />
    <path d="M37 6L61 32L49 32L49 25Z" fill="#dcefa0" />
    <path d="M28 37L34 33L48 31L30 38Z" fill="#eef7c8" />
  </Svg>
);

const Tools = ({ list, gap }: { list: [string, string][]; gap: number }) => (
  <ToolGroup $gap={gap}>
    {list.map(([n, l]) => <ToolButton key={n} aria-label={l}><Icon name={n} /></ToolButton>)}
  </ToolGroup>
);

const SideStrip = ({ list }: { list: string[] }) => (
  <Strip>
    <StripHead><HGrip /></StripHead>
    {list.map(n => (
      <SideButton key={n} aria-label={n} $on={n === 'points' || n === 'stopPick'}><Icon name={n} /></SideButton>
    ))}
  </Strip>
);

export default function App() {
  return (
    <Shell>
      <Global />
      <MenuBar>
        <AppGlyph>
          <Svg width="17" height="12" viewBox="0 0 17 12">
            <path d="M3 0H15Q14 9 9 11Q4 9 3 0Z" fill="#aaa69c" stroke="#777" />
            <path d="M8 0H11V5H8Z" fill="#eee" stroke="#888" />
          </Svg>
        </AppGlyph>
        {menus.map(m => <MenuButton key={m} $open={m === '尺寸标注'}>{m}</MenuButton>)}
        {menusRight.map((m, i) => <MenuButton key={m} $skip={i === 0}>{m}</MenuButton>)}
      </MenuBar>
      <ToolBar role="toolbar">
        <VGrip />
        <Tools list={toolFile} gap={0} />
        <ToolGroup $gap={7}><VGrip /></ToolGroup>
        <Tools list={toolEdit} gap={0} />
        <ToolGroup $gap={7}><VGrip /></ToolGroup>
        <Tools list={toolDim} gap={0} />
        <Tools list={toolRight} gap={131} />
      </ToolBar>
      <Work>
        <Side>
          <SideStrip list={stripA} />
          <SideStrip list={stripB} />
        </Side>
        <Canvas><Scene /></Canvas>
      </Work>
      <Status>
        <Prompt>对齐:选取开始点</Prompt>
        <Search><SearchInput aria-label="搜索" /><Icon name="find" size={12} /></Search>
        <Field $w={76}>绝对 XY 上视图</Field>
        <Field $w={36} $last>绝对视图</Field>
      </Status>

      <Menu role="menu">
        {entries.map((e, i) => e === null ? <Rule key={i} /> : (
          <MenuRow key={i} role="menuitem" $icon={!!e.i}>
            {e.i ? <Icon name={e.i} /> : <span />}
            <span>{e.t}</span>
            {e.k && <Shortcut>{e.k}</Shortcut>}
            {e.sub && <Sub width="5" height="8" viewBox="0 0 5 8"><path d="M0 0L5 4L0 8Z" /></Sub>}
          </MenuRow>
        ))}
      </Menu>
      <Pointer viewBox="0 0 14 20"><Cursor x={1} y={1} s={1} /></Pointer>
      <Watermark>
        <Brand>
          <Logo />
          <BrandText>
            <BrandName>工程师之家</BrandName>
            <BrandRule />
            <BrandUrl href="#home">www.<Tint $c="#f28a12">ug</Tint><Tint $c="#f0141e">88</Tint><Tint $c="#f28a12">ug</Tint>.com</BrandUrl>
          </BrandText>
        </Brand>
        <Banner><Tint $c="#ee1a22">购买教程请加</Tint><QQ>QQ:913147075</QQ></Banner>
      </Watermark>
    </Shell>
  );
}
